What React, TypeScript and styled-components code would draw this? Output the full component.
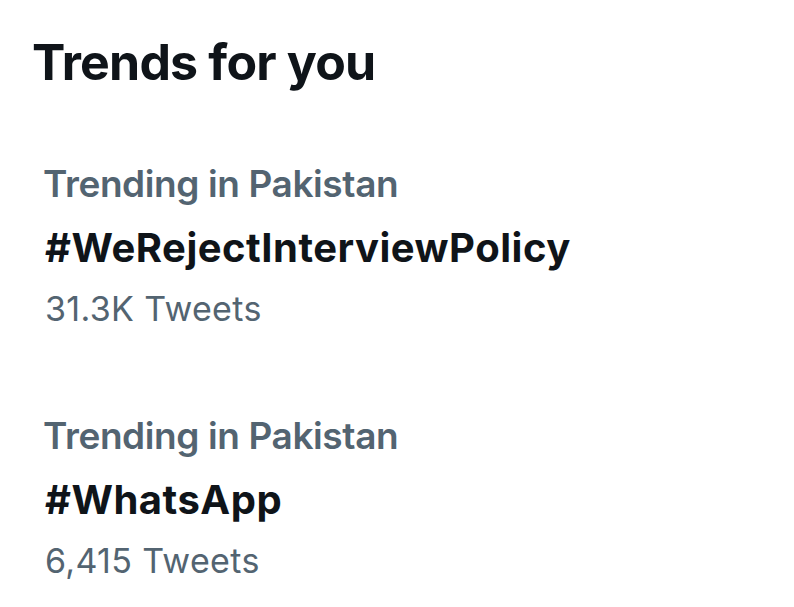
import styled, { createGlobalStyle } from 'styled-components';

const GlobalStyle = createGlobalStyle`
  html, body {
    margin: 0;
    padding: 0;
    background: #ffffff;
  }
  body {
    font-family: Inter, Roboto, "Liberation Sans", sans-serif;
    color: #0f1419;
  }
`;

const trends = [
  { place: 'Trending in Pakistan', tag: '#WeRejectInterviewPolicy', count: '31.3K Tweets' },
  { place: 'Trending in Pakistan', tag: '#WhatsApp', count: '6,415 Tweets' },
];

export default function App() {
  return (
    <>
      <GlobalStyle />
      <Panel>
        <Title>Trends for you</Title>
        <TrendList>
          {trends.map((t, i) => (
            <TrendItem key={i}>
              <Place>{t.place}</Place>
              <Tag>{t.tag}</Tag>
              <Count>{t.count}</Count>
            </TrendItem>
          ))}
        </TrendList>
      </Panel>
    </>
  );
}

const Panel = styled.div`
  display: flex;
  flex-direction: column;
  width: 794px;
  height: 607px;
  padding: 30px 0 0 32px;
  box-sizing: border-box;
  overflow: hidden;
`;

const Title = styled.h2`
  margin: 0;
  font-size: 50px;
  font-weight: 700;
  line-height: 64px;
  letter-spacing: -0.8px;
  color: #0f1419;
`;

const TrendList = styled.ul`
  list-style: none;
  margin: 0;
  padding: 0 0 0 13px;
  display: flex;
  flex-direction: column;
  gap: 68px;
  margin-top: 60px;
`;

const TrendItem = styled.li`
  display: flex;
  flex-direction: column;
`;

const Place = styled.span`
  margin-left: -2px;
  font-size: 37px;
  font-weight: 600;
  line-height: 60px;
  letter-spacing: -0.4px;
  color: #536471;
`;

const Tag = styled.span`
  margin-top: 3px;
  font-size: 40px;
  font-weight: 700;
  line-height: 62px;
  letter-spacing: 0.5px;
  color: #0f1419;
`;

const Count = styled.span`
  margin-top: 1px;
  font-size: 34px;
  font-weight: 400;
  line-height: 58px;
  letter-spacing: 0.35px;
  color: #536471;
`;
